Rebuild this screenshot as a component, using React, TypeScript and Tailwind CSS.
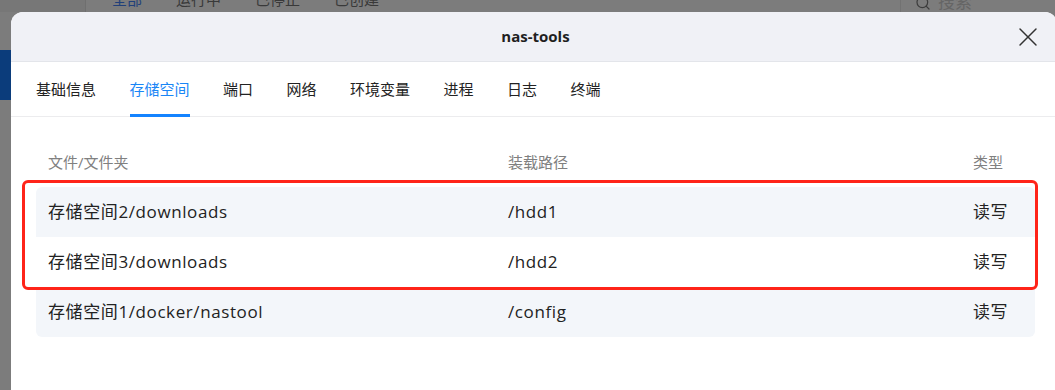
import { Search, X } from 'lucide-react'

const tabs = ['基础信息', '存储空间', '端口', '网络', '环境变量', '进程', '日志', '终端']

const mounts = [
  { src: '存储空间2/downloads', dest: '/hdd1', type: '读写' },
  { src: '存储空间3/downloads', dest: '/hdd2', type: '读写' },
  { src: '存储空间1/docker/nastool', dest: '/config', type: '读写' },
]

const font = "font-['Open_Sans','Noto_Sans_CJK_SC',sans-serif]"

export default function App() {
  return (
    <div className={`relative h-[390px] w-[1055px] overflow-hidden bg-[#7c7c7c] ${font}`}>
      {/* page behind the dialog, dimmed */}
      <div className="flex h-[12px] overflow-hidden">
        <div className="w-[86px] border-r border-[#6f6f6f] bg-[#777777]" />
        <div className="-mt-[8px] flex gap-[34px] pl-[26px] text-[15px] leading-[15px] text-[#393939]">
          <span className="text-[#21407a]">全部</span>
          <span>运行中</span>
          <span>已停止</span>
          <span>已创建</span>
        </div>
        <div className="ml-auto flex w-[155px] items-start gap-[7px] border-l border-[#727272] pl-[14px]">
          <Search className="-mt-[5px] h-[16px] w-[16px] text-[#3d3d3d]" strokeWidth={1.8} />
          <span className="-mt-[7px] text-[17px] leading-[17px] text-[#656565]">搜索</span>
        </div>
      </div>
      <div className="w-[86px]">
        <div className="mt-[38px] h-[50px] bg-[#0b3c7b]" />
      </div>

      {/* dialog */}
      <div className="absolute left-[11px] top-[12px] h-[400px] w-[1046px] overflow-hidden rounded-[12px] bg-white">
        <div className="grid h-[50px] grid-cols-[1fr_auto_1fr] items-center border-b border-[#e3e5ea] bg-[#f0f1f6]">
          <div />
          <div className="pl-[3px] text-[15px] font-bold text-[#1f1f1f]">nas-tools</div>
          <div className="flex justify-end pr-[13px]">
            <X className="h-[32px] w-[32px] text-[#333333]" strokeWidth={1.1} />
          </div>
        </div>

        <div className="flex h-[55px] gap-[33.5px] border-b border-[#ececee] pl-[25px] font-['Noto_Sans_CJK_SC',sans-serif] text-[15px]">
          {tabs.map((t) => (
            <div
              key={t}
              className={`relative flex items-center ${t === '存储空间' ? 'text-[#1a86f6]' : 'text-[#222222]'}`}
            >
              {t}
              {t === '存储空间' && (
                <span className="absolute -bottom-[1px] left-0 right-0 h-[3px] bg-[#1483ff]" />
              )}
            </div>
          ))}
        </div>

        <div className="pl-[25px] pr-[22px] pt-[20px]">
          <div className="grid h-[50px] grid-cols-[460px_465px_1fr] items-center px-[12px] text-[15px] text-[#808080]">
            <span>文件/文件夹</span>
            <span>装载路径</span>
            <span>类型</span>
          </div>
          <div className="overflow-hidden rounded-[6px]">
            {mounts.map((m, i) => (
              <div
                key={m.src}
                className={`grid h-[50px] grid-cols-[460px_465px_1fr] items-center px-[12px] text-[17px] tracking-[0.6px] text-[#222222] ${
                  i % 2 === 0 ? 'bg-[#f3f6fa]' : 'bg-white'
                }`}
              >
                <span>{m.src}</span>
                <span>{m.dest}</span>
                <span>{m.type}</span>
              </div>
            ))}
          </div>
        </div>

        {/* red annotation box */}
        <div className="absolute left-[11px] top-[168px] h-[110px] w-[1016px] rounded-[6px] border-[3px] border-[#ff2419]" />
      </div>
    </div>
  )
}
